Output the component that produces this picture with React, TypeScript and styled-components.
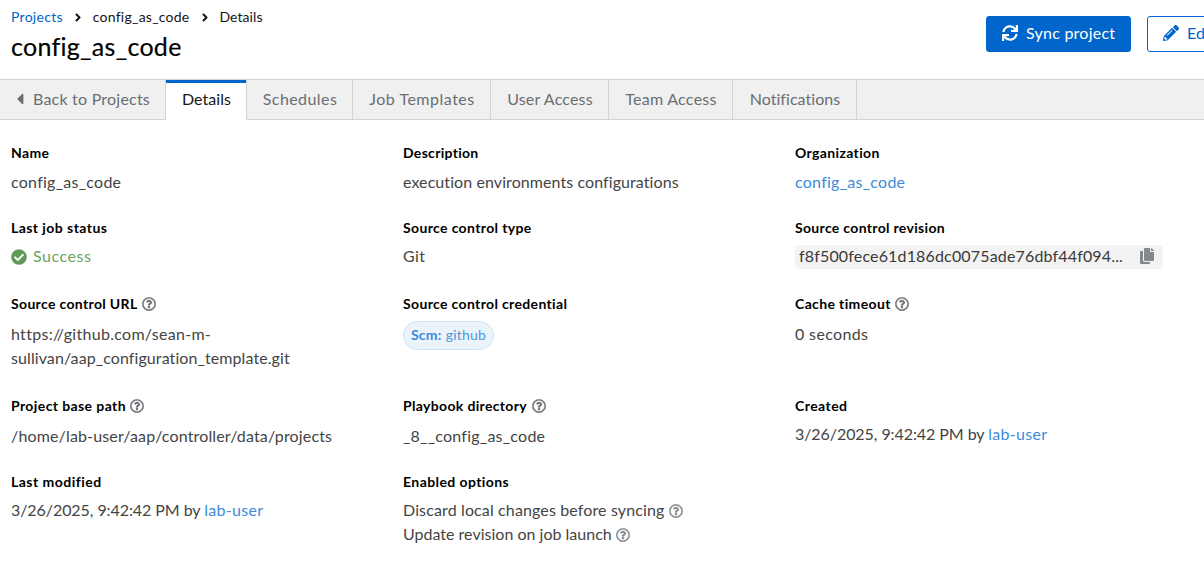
import React from 'react';
import styled, { createGlobalStyle } from 'styled-components';
import {
  FaAngleRight,
  FaCaretLeft,
  FaCheckCircle,
  FaCopy,
  FaPencilAlt,
  FaRegQuestionCircle,
  FaSync,
} from 'react-icons/fa';

const GlobalStyle = createGlobalStyle`
  *, *::before, *::after { box-sizing: border-box; }
  html, body { margin: 0; height: 100%; overflow: hidden; background: #fff; }
  body { font-family: Lato, sans-serif; font-size: 16px; color: #151515; }
`;

const Page = styled.main`
  width: 100%;
  height: 581px;
  overflow: hidden;
  background: #fff;
`;

const Header = styled.header`
  display: flex;
  justify-content: space-between;
  height: 79px;
  padding-left: 11px;
`;

const Text = styled.span<{ $track?: number }>`
  letter-spacing: ${({ $track = 0 }) => $track}px;
`;

const Heading = styled.div`
  padding-top: 7px;
`;

const Breadcrumb = styled.nav`
  display: flex;
  align-items: center;
  height: 20px;
  font-size: 14px;
  line-height: 20px;

  svg {
    width: 10px;
    height: 13px;
    margin: 0 10px;
  }
`;

const CrumbLink = styled(Text)`
  color: #0066cc;
`;

const Title = styled.h1`
  margin: 4px 0 0;
  font-size: 25px;
  font-weight: 400;
  line-height: 30px;
  letter-spacing: 0.28px;
  color: #000;
  -webkit-text-stroke: 0.2px #000;
`;

const Actions = styled.div`
  display: flex;
  flex: none;
  gap: 16px;
  width: 218px;
  padding-top: 16px;
`;

const Button = styled.button<{ $primary?: boolean }>`
  display: flex;
  flex: none;
  align-items: center;
  gap: 8px;
  height: 36px;
  width: ${({ $primary }) => ($primary ? 145 : 84)}px;
  padding: 0 15px;
  border: 1px solid #0066cc;
  border-radius: 3px;
  background: ${({ $primary }) => ($primary ? '#0066cc' : '#fff')};
  color: ${({ $primary }) => ($primary ? '#fff' : '#0066cc')};
  font: inherit;
  white-space: nowrap;

  svg {
    flex: none;
    width: 16px;
    height: 16px;
    margin-bottom: 2px;
  }

  span {
    padding-bottom: 3px;
  }
`;

const TabBar = styled.div`
  display: flex;
  height: 41px;
  border-top: 1px solid #d2d2d2;
  background: #f0f0f0;
  box-shadow: inset 0 -1px #d2d2d2;
`;

const Tab = styled.button<{ $width: number; $active?: boolean }>`
  display: flex;
  flex: none;
  align-items: center;
  justify-content: center;
  gap: 9px;
  width: ${({ $width }) => $width}px;
  height: 40px;
  padding: 0 0 3px 1px;
  border: 0;
  border-right: 1px solid #d2d2d2;
  background: ${({ $active }) => ($active ? '#fff' : 'transparent')};
  box-shadow: ${({ $active }) => ($active ? 'inset 0 3px #0066cc' : 'none')};
  color: ${({ $active }) => ($active ? '#151515' : '#6a6e73')};
  font: inherit;
  white-space: nowrap;

  svg {
    width: 8px;
    height: 18px;
  }
`;

const Details = styled.dl`
  display: grid;
  grid-template-columns: repeat(3, 368px);
  grid-template-rows: 75px 76px 102px 76px 80px;
  column-gap: 24px;
  margin: 0;
  padding: 23px 0 0 11px;
`;

const Item = styled.div`
  min-width: 0;
`;

const Label = styled.dt`
  display: flex;
  align-items: center;
  height: 20px;
  font-size: 14px;
  font-weight: 700;
  line-height: 20px;
  color: #000;
`;

const Value = styled.dd<{ $gap?: number }>`
  margin: ${({ $gap = 7 }) => $gap}px 0 0;
  line-height: 22px;
  color: #444;
`;

const Line = styled.div`
  display: flex;
  align-items: center;
  height: 24px;
  white-space: nowrap;

  span {
    height: 24px;
  }
`;

const ValueLink = styled(Text)`
  color: #3d8bd9;
`;

const HelpIcon = styled(FaRegQuestionCircle)<{ $muted?: boolean }>`
  flex: none;
  width: 14px;
  height: 14px;
  margin-left: 4.5px;
  stroke: currentColor;
  stroke-width: 10px;
  color: ${({ $muted }) => ($muted ? '#85888c' : '#6a6e73')};
`;

const Status = styled(Line)`
  gap: 6px;
  color: #6ba35f;

  svg {
    width: 16px;
    height: 16px;
    margin-bottom: 1px;
    color: #5f9b57;
  }
`;

const Chip = styled.div`
  display: inline-flex;
  align-items: center;
  justify-content: center;
  gap: 4px;
  width: 91px;
  height: 29px;
  padding-bottom: 2px;
  border: 1px solid #cbe5f3;
  border-radius: 15px;
  background: #ebf3fb;
  color: #4f97de;
  font-size: 14px;
  letter-spacing: 0.25px;

  strong {
    color: #3d8bd9;
  }
`;

const Revision = styled.div`
  display: flex;
  align-items: center;
  justify-content: space-between;
  height: 24px;
  padding: 0 9px 0 4px;
  border-radius: 4px;
  background: #f3f3f3;
  color: #3a3a3a;

  span {
    height: 24px;
  }

  svg {
    width: 14px;
    height: 16px;
    margin-bottom: 2px;
    color: #85888c;
  }
`;

type LabelProps = { text: string; track: number; help?: boolean };

const ItemLabel = ({ text, track, help }: LabelProps) => (
  <Label>
    <Text $track={track}>{text}</Text>
    {help && <HelpIcon />}
  </Label>
);

const TABS = [
  { text: 'Details', width: 82, track: 0.05, active: true },
  { text: 'Schedules', width: 106, track: 0.42 },
  { text: 'Job Templates', width: 138, track: 0.51 },
  { text: 'User Access', width: 118, track: 0.17 },
  { text: 'Team Access', width: 124, track: 0.27 },
  { text: 'Notifications', width: 124, track: 0.06 },
];

const Stamp = () => (
  <Line>
    <Text $track={-0.07}>3/26/2025, 9:42:42 PM by&nbsp;</Text>
    <ValueLink $track={0.3}>lab-user</ValueLink>
  </Line>
);

export default function App() {
  return (
    <Page>
      <GlobalStyle />
      <Header>
        <Heading>
          <Breadcrumb>
            <CrumbLink $track={0.28}>Projects</CrumbLink>
            <FaAngleRight />
            <Text $track={0.24}>config_as_code</Text>
            <FaAngleRight />
            <Text $track={0.06}>Details</Text>
          </Breadcrumb>
          <Title>config_as_code</Title>
        </Heading>
        <Actions>
          <Button $primary>
            <FaSync />
            <Text $track={0.24}>Sync project</Text>
          </Button>
          <Button>
            <FaPencilAlt />
            <Text>Edit</Text>
          </Button>
        </Actions>
      </Header>

      <TabBar>
        <Tab $width={166}>
          <FaCaretLeft />
          <Text $track={0.22}>Back to Projects</Text>
        </Tab>
        {TABS.map((tab) => (
          <Tab key={tab.text} $width={tab.width - (tab.active ? 1 : 0)} $active={tab.active}>
            <Text $track={tab.track}>{tab.text}</Text>
          </Tab>
        ))}
      </TabBar>

      <Details>
        <Item>
          <ItemLabel text="Name" track={0.34} />
          <Value $gap={8}><Line><Text $track={0.26}>config_as_code</Text></Line></Value>
        </Item>
        <Item>
          <ItemLabel text="Description" track={0.3} />
          <Value $gap={8}><Line><Text $track={0.08}>execution environments configurations</Text></Line></Value>
        </Item>
        <Item>
          <ItemLabel text="Organization" track={0.36} />
          <Value $gap={8}><Line><ValueLink $track={0.26}>config_as_code</ValueLink></Line></Value>
        </Item>

        <Item>
          <ItemLabel text="Last job status" track={0.44} />
          <Value><Status><FaCheckCircle /><Text $track={0.54}>Success</Text></Status></Value>
        </Item>
        <Item>
          <ItemLabel text="Source control type" track={0.36} />
          <Value><Line><Text $track={0.4}>Git</Text></Line></Value>
        </Item>
        <Item>
          <ItemLabel text="Source control revision" track={0.32} />
          <Value>
            <Revision>
              <Text $track={0.16}>f8f500fece61d186dc0075ade76dbf44f094...</Text>
              <FaCopy />
            </Revision>
          </Value>
        </Item>

        <Item>
          <ItemLabel text="Source control URL" track={0.34} help />
          <Value $gap={9}>
            <Line><Text $track={0.29}>https://github.com/sean-m-</Text></Line>
            <Line><Text $track={0.09}>sullivan/aap_configuration_template.git</Text></Line>
          </Value>
        </Item>
        <Item>
          <ItemLabel text="Source control credential" track={0.35} />
          <Value>
            <Chip>
              <strong>Scm:</strong>
              <Text $track={0.2}>github</Text>
            </Chip>
          </Value>
        </Item>
        <Item>
          <ItemLabel text="Cache timeout" track={0.37} help />
          <Value $gap={9}><Line><Text $track={0.36}>0 seconds</Text></Line></Value>
        </Item>

        <Item>
          <ItemLabel text="Project base path" track={0.4} help />
          <Value $gap={9}><Line><Text $track={0.15}>/home/lab-user/aap/controller/data/projects</Text></Line></Value>
        </Item>
        <Item>
          <ItemLabel text="Playbook directory" track={0.34} help />
          <Value $gap={9}><Line><Text $track={0.24}>_8__config_as_code</Text></Line></Value>
        </Item>
        <Item>
          <ItemLabel text="Created" track={0.45} />
          <Value><Stamp /></Value>
        </Item>

        <Item>
          <ItemLabel text="Last modified" track={0.48} />
          <Value><Stamp /></Value>
        </Item>
        <Item>
          <ItemLabel text="Enabled options" track={0.42} />
          <Value>
            <Line><Text $track={0.13}>Discard local changes before syncing</Text><HelpIcon $muted /></Line>
            <Line><Text $track={0.01}>Update revision on job launch</Text><HelpIcon $muted /></Line>
          </Value>
        </Item>
      </Details>
    </Page>
  );
}
